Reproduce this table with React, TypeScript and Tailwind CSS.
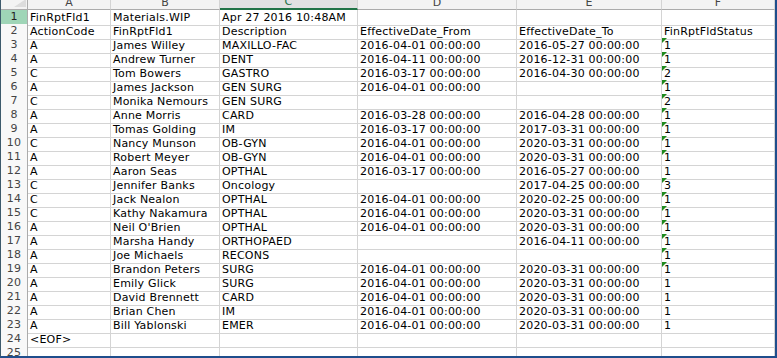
import React from 'react';

type Row = [string, string, string, string, string, string, boolean?];

const COLUMNS = ['A', 'B', 'C', 'D', 'E', 'F'];

const ROWS: Row[] = [
    ['FinRptFld1', 'Materials.WIP', 'Apr 27 2016 10:48AM', '', '', ''],
    ['ActionCode', 'FinRptFld1', 'Description', 'EffectiveDate_From', 'EffectiveDate_To', 'FinRptFldStatus'],
    ['A', 'James Willey', 'MAXILLO-FAC', '2016-04-01 00:00:00', '2016-05-27 00:00:00', '1', true],
    ['A', 'Andrew Turner', 'DENT', '2016-04-11 00:00:00', '2016-12-31 00:00:00', '1', true],
    ['C', 'Tom Bowers', 'GASTRO', '2016-03-17 00:00:00', '2016-04-30 00:00:00', '2', true],
    ['A', 'James Jackson', 'GEN SURG', '2016-04-01 00:00:00', '', '1', true],
    ['C', 'Monika Nemours', 'GEN SURG', '', '', '2', true],
    ['A', 'Anne Morris', 'CARD', '2016-03-28 00:00:00', '2016-04-28 00:00:00', '1', true],
    ['A', 'Tomas Golding', 'IM', '2016-03-17 00:00:00', '2017-03-31 00:00:00', '1', true],
    ['C', 'Nancy Munson', 'OB-GYN', '2016-04-01 00:00:00', '2020-03-31 00:00:00', '1', true],
    ['A', 'Robert Meyer', 'OB-GYN', '2016-04-01 00:00:00', '2020-03-31 00:00:00', '1', true],
    ['A', 'Aaron Seas', 'OPTHAL', '2016-03-17 00:00:00', '2016-05-27 00:00:00', '1'],
    ['C', 'Jennifer Banks', 'Oncology', '', '2017-04-25 00:00:00', '3', true],
    ['C', 'Jack Nealon', 'OPTHAL', '2016-04-01 00:00:00', '2020-02-25 00:00:00', '1', true],
    ['C', 'Kathy Nakamura', 'OPTHAL', '2016-04-01 00:00:00', '2020-03-31 00:00:00', '1', true],
    ['A', "Neil O'Brien", 'OPTHAL', '2016-04-01 00:00:00', '2020-03-31 00:00:00', '1', true],
    ['A', 'Marsha Handy', 'ORTHOPAED', '', '2016-04-11 00:00:00', '1', true],
    ['A', 'Joe Michaels', 'RECONS', '', '', '1', true],
    ['A', 'Brandon Peters', 'SURG', '2016-04-01 00:00:00', '2020-03-31 00:00:00', '1', true],
    ['A', 'Emily Glick', 'SURG', '2016-04-01 00:00:00', '2020-03-31 00:00:00', '1'],
    ['A', 'David Brennett', 'CARD', '2016-04-01 00:00:00', '2020-03-31 00:00:00', '1'],
    ['A', 'Brian Chen', 'IM', '2016-04-01 00:00:00', '2020-03-31 00:00:00', '1'],
    ['A', 'Bill Yablonski', 'EMER', '2016-04-01 00:00:00', '2020-03-31 00:00:00', '1'],
    ['<EOF>', '', '', '', '', ''],
    ['', '', '', '', '', ''],
];

const GRID = 'grid grid-cols-[27px_83px_109px_138px_159px_145px_1fr]';

// little green "number stored as text" flag
const TextFlag = () => (
    <svg className="absolute left-0 top-0" width="5" height="5" viewBox="0 0 5 5">
        <polygon points="0,0 5,0 0,5" fill="#1e8a1e" />
    </svg>
);

const HeaderRow = () => (
    <div className={`${GRID} h-[10px] bg-[#f3f3f3]`}>
        <div className="relative border-r border-b border-[#ababab] overflow-hidden">
            <svg className="absolute right-[1px] bottom-[2px]" width="12" height="8" viewBox="0 0 12 8">
                <polygon points="12,0 12,8 0,8" fill="#dcdcdc" />
            </svg>
        </div>
        {COLUMNS.map(col => (
            <div
                key={col}
                className={`relative flex items-end justify-center overflow-hidden border-r border-[#d4d4d4] ${
                    col === 'C' ? 'border-b-2 border-b-[#217346] text-[#217346] bg-[#e1e1e1]' : 'border-b border-b-[#ababab] text-[#444]'
                }`}
            >
                <span className="leading-none mb-[1px]">{col}</span>
            </div>
        ))}
    </div>
);

const SheetRow: React.FC<{ num: number; row: Row }> = ({ num, row }) => (
    <div className={`${GRID} h-[14px]`}>
        <div
            className={`flex justify-center border-r border-b border-[#ababab] leading-[14px] ${
                num === 1 ? 'bg-[#9fd5b7] text-[#222]' : 'bg-[#f8f8f8] text-[#444]'
            }`}
        >
            {num}
        </div>
        {row.slice(0, 6).map((value, i) => (
            <div
                key={i}
                className="relative whitespace-nowrap overflow-visible border-r border-b border-[#d4d4d4] pl-[2px] leading-[15px] text-black"
            >
                {i === 5 && row[6] && <TextFlag />}
                {value}
            </div>
        ))}
    </div>
);

export default function App() {
    return (
        <div
            className="w-[777px] h-[358px] overflow-hidden bg-white border-l border-l-[#3d5a6c] border-r-2 border-b-2 border-r-[#1f4e8c] border-b-[#1f4e8c] text-[11px] tracking-[0.2px]"
            style={{ fontFamily: '"DejaVu Sans", Verdana, sans-serif' }}
        >
            <HeaderRow />
            {ROWS.map((row, idx) => (
                <SheetRow key={idx} num={idx + 1} row={row} />
            ))}
        </div>
    );
}
